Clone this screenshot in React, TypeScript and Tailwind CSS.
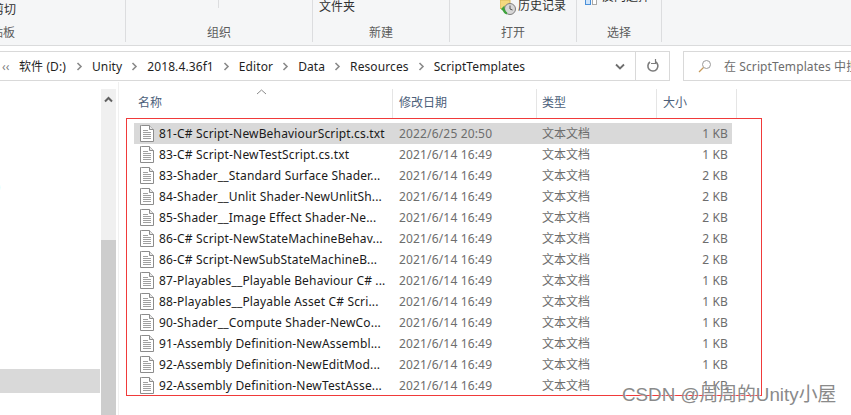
import React from "react";

const font = "font-['Noto_Sans','Noto_Sans_CJK_SC',sans-serif]";

const files = [
  { name: "81-C# Script-NewBehaviourScript.cs.txt", date: "2022/6/25 20:50", size: "1 KB", selected: true },
  { name: "83-C# Script-NewTestScript.cs.txt", date: "2021/6/14 16:49", size: "1 KB" },
  { name: "83-Shader__Standard Surface Shader...", date: "2021/6/14 16:49", size: "2 KB" },
  { name: "84-Shader__Unlit Shader-NewUnlitSh...", date: "2021/6/14 16:49", size: "2 KB" },
  { name: "85-Shader__Image Effect Shader-Ne...", date: "2021/6/14 16:49", size: "2 KB" },
  { name: "86-C# Script-NewStateMachineBehav...", date: "2021/6/14 16:49", size: "2 KB" },
  { name: "86-C# Script-NewSubStateMachineB...", date: "2021/6/14 16:49", size: "2 KB" },
  { name: "87-Playables__Playable Behaviour C# ...", date: "2021/6/14 16:49", size: "1 KB" },
  { name: "88-Playables__Playable Asset C# Scri...", date: "2021/6/14 16:49", size: "1 KB" },
  { name: "90-Shader__Compute Shader-NewCo...", date: "2021/6/14 16:49", size: "1 KB" },
  { name: "91-Assembly Definition-NewAssembl...", date: "2021/6/14 16:49", size: "1 KB" },
  { name: "92-Assembly Definition-NewEditMod...", date: "2021/6/14 16:49", size: "1 KB" },
  { name: "92-Assembly Definition-NewTestAsse...", date: "2021/6/14 16:49", size: "1 KB" },
];

const crumbs = ["Unity", "2018.4.36f1", "Editor", "Data", "Resources", "ScriptTemplates"];

const TextFileIcon = () => (
  <svg width="14" height="17" viewBox="0 0 14 17" className="shrink-0">
    <path d="M1.5 .5H9.5L13.5 4.5V16.5H.5V.5Z" fill="#fff" stroke="#8c8c8c" />
    <path d="M9.5 .5V4.5H13.5" fill="#e8e8e8" stroke="#8c8c8c" />
    <path d="M3 5.5H8M3 7.5H11M3 9.5H11M3 11.5H11M3 13.5H11" stroke="#a0a0a0" />
  </svg>
);

const Chevron = () => (
  <svg width="7" height="9" viewBox="0 0 7 9" className="shrink-0">
    <path d="M1.5 1L5 4.5L1.5 8" fill="none" stroke="#8a8a8a" strokeWidth="1.6" />
  </svg>
);

const RibbonGroup = ({ width, label, children }: { width: string; label: string; children?: React.ReactNode }) => (
  <div className={`${width} h-[42px] border-r border-[#dcdddf] flex flex-col overflow-hidden relative`}>
    <div className="h-[24px] shrink-0 relative">{children}</div>
    <div className="h-[18px] text-center text-xs leading-[18px] text-[#5c5c5c]">{label}</div>
  </div>
);

export default function App() {
  return (
    <div className={`${font} relative w-[851px] h-[415px] overflow-hidden bg-white flex flex-col text-xs`}>
      {/* ribbon, cut off at the top */}
      <div className="h-[46px] shrink-0 bg-[#f5f6f7] border-b border-[#dadbdc] flex">
        <RibbonGroup width="w-[126px]" label="">
          <span className="absolute left-[-8px] top-[2px] leading-4 text-[#303030]">剪切</span>
          <span className="absolute left-[-9px] top-[24px] leading-[18px] text-[#5c5c5c]">贴板</span>
        </RibbonGroup>
        <div className="w-[187px] h-[42px] border-r border-[#dcdddf] flex flex-col relative">
          <div className="h-[24px] shrink-0 flex">
            <div className="w-[93px] h-[8px] border-r border-[#dcdddf]" />
          </div>
          <div className="h-[18px] text-center leading-[18px] text-[#5c5c5c]">组织</div>
        </div>
        <RibbonGroup width="w-[137px]" label="新建">
          <span className="absolute left-[6px] top-[-1px] leading-4 text-[#303030]">文件夹</span>
        </RibbonGroup>
        <RibbonGroup width="w-[127px]" label="打开">
          <svg width="17" height="15" viewBox="0 0 17 15" className="absolute left-[50px] top-0">
            <path d="M0 0H10V9H1L0 8Z" fill="#f4d97e" stroke="#d8b95a" />
            <circle cx="10" cy="9" r="5.5" fill="#d7d7d7" stroke="#7d7d7d" />
            <path d="M10 5.5V9L12.5 10" fill="none" stroke="#555" />
            <path d="M1 9L4.5 5.5V12.5Z" fill="#3da33d" />
            <path d="M4 9C4 11 5 13 7 13.5" fill="none" stroke="#3da33d" strokeWidth="2" />
          </svg>
          <span className="absolute left-[68px] top-[-2px] leading-4 text-[#303030]">历史记录</span>
        </RibbonGroup>
        <RibbonGroup width="w-[85px]" label="选择">
          <div className="absolute left-[8px] top-[-3px] w-[6px] h-[8px] bg-[#cfe4fa] border border-[#4a90d9]" />
          <div className="absolute left-[15px] top-[-3px] w-[5px] h-[8px] bg-white border border-[#a8a8a8]" />
          <span className="absolute left-[25px] top-[-11px] leading-4 text-[#303030]">反向选择</span>
        </RibbonGroup>
      </div>

      {/* address row */}
      <div className="h-[36px] shrink-0 pt-[5px] pb-[1px] flex items-stretch tracking-[0.1px] whitespace-nowrap">
        <div className="w-[671px] ml-[-1px] border border-[#d9d9d9] flex items-stretch">
          <div className="flex-1 flex items-center pt-px text-[#1f1f1f]">
            <span className="w-[19px] pl-[2px] text-[#808080] leading-none">‹‹</span>
            <span className="w-[48px]">软件 (D:)</span>
            <div className="flex items-center">
              {crumbs.map((crumb) => (
                <React.Fragment key={crumb}>
                  <span className="w-[25px] flex justify-center"><Chevron /></span>
                  <span>{crumb}</span>
                </React.Fragment>
              ))}
            </div>
            <svg width="10" height="7" viewBox="0 0 10 7" className="ml-auto mr-[10px]">
              <path d="M1 1.5L5 5.5L9 1.5" fill="none" stroke="#6e6e6e" strokeWidth="1.8" />
            </svg>
          </div>
          <div className="w-[34px] border-l border-[#d9d9d9] flex items-center justify-center">
            <svg width="14" height="14" viewBox="0 0 14 14">
              <path d="M9.5 2.8A5 5 0 1 1 4 3" fill="none" stroke="#7c7c7c" strokeWidth="1.6" />
              <path d="M9.5 0V4.5H5" fill="none" stroke="#7c7c7c" strokeWidth="1.2" />
            </svg>
          </div>
        </div>
        <div className="ml-[13px] flex-1 border border-r-0 border-[#d9d9d9] flex items-center pl-[14px] overflow-hidden text-[#6d6d6d]">
          <svg width="14" height="14" viewBox="0 0 14 14" className="shrink-0">
            <circle cx="8.5" cy="5.5" r="4" fill="none" stroke="#9a9a9a" />
            <path d="M5.5 8.5L1 13" stroke="#c79a5b" strokeWidth="1.3" />
          </svg>
          <span className="ml-[12px] pt-px">在 ScriptTemplates 中搜索</span>
        </div>
      </div>

      {/* nav pane and file list */}
      <div className="flex-1 flex min-h-0">
        <div className="w-[100px] shrink-0 flex flex-col">
          <div className="mt-[97px] h-[16px] ml-[-19px] leading-4 text-[#1f1f1f]">(D:)</div>
          <div className="mt-[174px] h-[24px] bg-[#d9d9d9]" />
        </div>
        <div className="ml-[1px] mt-[7px] w-[15px] shrink-0 flex flex-col">
          <div className="h-[151px] bg-[#f0f0f0] flex justify-center pt-[7px]">
            <svg width="9" height="7" viewBox="0 0 9 7">
              <path d="M1 5.5L4.5 2L8 5.5" fill="none" stroke="#606060" strokeWidth="2" />
            </svg>
          </div>
          <div className="flex-1 bg-[#cdcdcd]" />
        </div>
        <div className="ml-[2px] w-px bg-[#f0f0f0] shrink-0" />
        <div className="flex-1 min-w-0 flex flex-col">
          <div className="relative mt-[7px] ml-[15px] h-[29px] flex text-[#4c607a]">
            <div className="w-[259px] pl-[4px] border-r border-[#e5e5e5] leading-[26px] pt-[1px]">名称</div>
            <svg width="11" height="6" viewBox="0 0 11 6" className="absolute left-[122px] top-0">
              <path d="M1 5L5.5 1L10 5" fill="none" stroke="#8a8a8a" />
            </svg>
            <div className="w-[144px] pl-[6px] border-r border-[#e5e5e5] leading-[26px] pt-[1px]">修改日期</div>
            <div className="w-[120px] pl-[5px] border-r border-[#e5e5e5] leading-[26px] pt-[1px]">类型</div>
            <div className="w-[80px] pl-[6px] border-r border-[#e5e5e5] leading-[26px] pt-[1px]">大小</div>
          </div>
          <div className="mt-[5px] ml-[15px] w-[598px] flex flex-col tracking-[0.16px]">
            {files.map((file) => (
              <div
                key={file.name}
                className={`h-[21px] grid grid-cols-[265px_143px_1fr_auto] items-center pr-[4px] whitespace-nowrap ${file.selected ? "bg-[#d9d9d9]" : ""}`}
              >
                <div className="flex items-center gap-[5px] pl-[6px] text-[#1a1a1a]">
                  <TextFileIcon />
                  <span>{file.name}</span>
                </div>
                <span className="text-[#6d6d6d]">{file.date}</span>
                <span className="text-[#6d6d6d] tracking-normal">文本文档</span>
                <span className="text-[#6d6d6d]">{file.size}</span>
              </div>
            ))}
          </div>
        </div>
      </div>

      {/* annotation drawn over the screenshot */}
      <div className="absolute left-[126px] top-[118px] w-[636px] h-[278px] border border-[#f03a3a]" />
      <div className="absolute left-[622px] top-[383px] text-[18.8px] leading-6 whitespace-nowrap text-[#8a8a8a] [text-shadow:1px_1px_1px_rgba(255,255,255,0.8)] font-['Liberation_Sans','Noto_Sans_CJK_SC',sans-serif]">
        CSDN @周周的Unity小屋
      </div>
    </div>
  );
}
